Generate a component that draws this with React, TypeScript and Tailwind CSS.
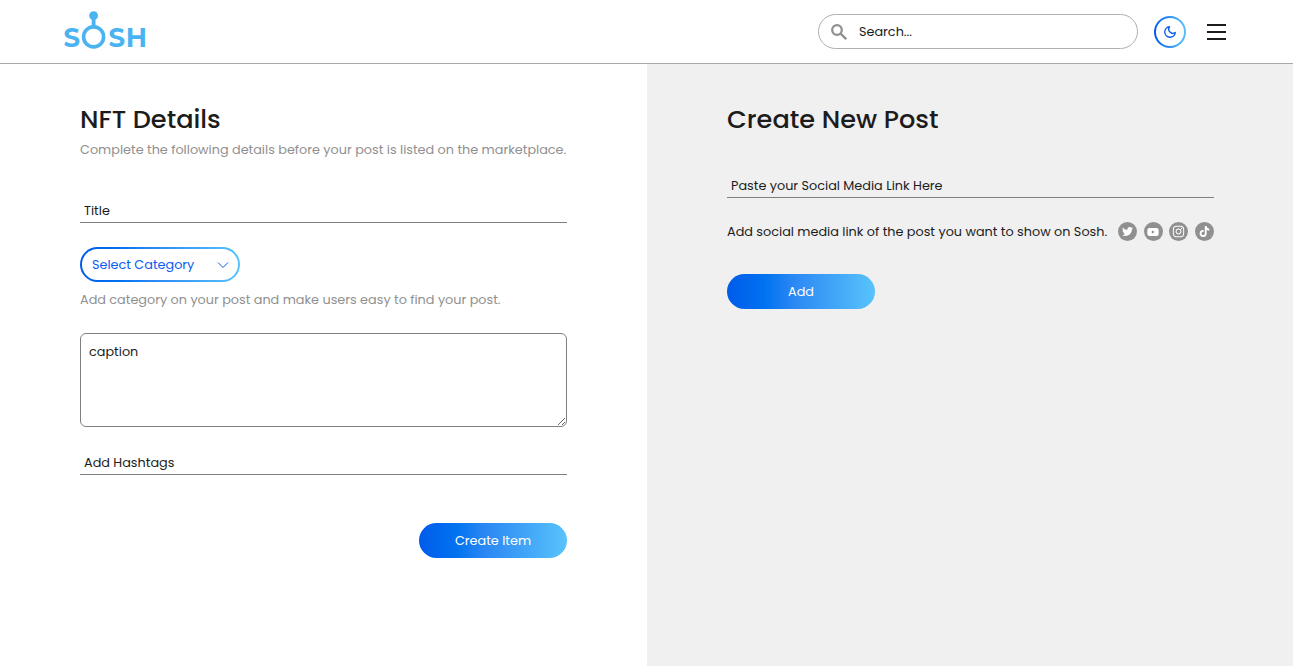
import React from "react";
import { FaTwitter, FaYoutube, FaInstagram, FaTiktok } from "react-icons/fa";
import { FiMoon } from "react-icons/fi";

function Logo() {
  return (
    <svg width="84" height="48" viewBox="0 0 84 48" fill="#4ab3f1" className="block overflow-visible" aria-label="Sosh">
      <circle cx="29.6" cy="5.7" r="4.4" />
      <rect x="27.7" y="8" width="3.8" height="10" />
      <circle cx="29.6" cy="26.9" r="10" fill="none" stroke="#4ab3f1" strokeWidth="3.6" />
      <g fontFamily="Montserrat, Lato, sans-serif" fontWeight="700" fontSize="27">
        <text x="-0.6" y="37" textLength="16.6" lengthAdjust="spacingAndGlyphs">S</text>
        <text x="44.4" y="37" textLength="16.6" lengthAdjust="spacingAndGlyphs">S</text>
        <text x="61.7" y="37" textLength="21.3" lengthAdjust="spacingAndGlyphs">H</text>
      </g>
    </svg>
  );
}

function Header() {
  return (
    <header className="flex h-16 shrink-0 items-center border-b border-[#a9a9a9] bg-white pl-16 pr-[67px]">
      <div className="mb-[3px] mt-2"><Logo /></div>
      <div className="ml-auto flex h-[35px] w-80 items-center rounded-full border border-[#b0b0b0] pl-3">
        <svg width="16" height="16" viewBox="0 0 16 16" fill="none" stroke="#909090" strokeWidth="2.3" className="shrink-0">
          <circle cx="6" cy="6" r="4.8" />
          <path d="m9.6 9.6 5.6 5.6" />
        </svg>
        <input
          placeholder="Search..."
          className="ml-3 w-60 text-[12.8px] outline-none placeholder:text-[#1c1c1c]"
        />
      </div>
      <button className="ml-4 size-8 rounded-full bg-linear-to-r from-[#005bea] to-[#58c3fc] p-0.5">
        <span className="flex size-full items-center justify-center rounded-full bg-white">
          <FiMoon className="size-[14px] text-[#0a5cf0]" strokeWidth={2.4} />
        </span>
      </button>
      <button className="ml-5 flex w-5 flex-col gap-[5px] px-[0.5px]">
        <span className="h-0.5 w-full bg-[#1c1c1c]" />
        <span className="h-0.5 w-full bg-[#1c1c1c]" />
        <span className="h-0.5 w-full bg-[#1c1c1c]" />
      </button>
    </header>
  );
}

const field =
  "block h-6 w-full border-b border-[#808080] bg-transparent px-1 text-[12.8px] outline-none placeholder:text-[#1c1c1c]";
const action =
  "flex h-[35px] w-[148px] items-center justify-center rounded-full bg-[linear-gradient(90deg,#005bea_0%,#0072f0_25%,#2b88f3_45%,#58c3fc_100%)] text-[12.8px] text-white";

function Social({ children }: { children: React.ReactNode }) {
  return (
    <span className="flex size-[19px] items-center justify-center rounded-full bg-[#909090] text-white">
      {children}
    </span>
  );
}

export default function App() {
  return (
    <div className="flex h-screen flex-col overflow-hidden bg-white font-['Poppins','Inter',sans-serif] text-[12.8px] text-[#1c1c1c]">
      <Header />
      <main className="grid flex-1 grid-cols-[647px_1fr]">
        <section className="px-20 pt-[39px]">
          <h1 className="whitespace-nowrap text-[25.6px] font-medium leading-8">NFT Details</h1>
          <p className="mt-[5px] whitespace-nowrap leading-5 text-[#909090]">
            Complete the following details before your post is listed on the marketplace.
          </p>
          <input placeholder="Title" className={`${field} mt-[39px]`} />
          <button className="mt-6 block h-[35px] w-40 rounded-full bg-[linear-gradient(90deg,#005bea_0%,#0072f0_25%,#2b88f3_45%,#58c3fc_100%)] p-0.5">
            <span className="flex size-full items-center justify-between rounded-full bg-white pl-[10px] pr-[9px] text-[#0a5cf0]">
              Select Category
              <svg width="12" height="8" viewBox="0 0 12 8" fill="none" stroke="currentColor">
                <path d="M1 1.5 6 6.5 11 1.5" />
              </svg>
            </span>
          </button>
          <p className="mt-2 whitespace-nowrap leading-5 text-[#909090]">
            Add category on your post and make users easy to find your post.
          </p>
          <textarea
            placeholder="caption"
            className="mt-[23px] block h-[94px] w-full rounded-md border border-[#808080] px-2 py-2 leading-5 outline-none placeholder:text-[#1c1c1c]"
          />
          <input placeholder="Add Hashtags" className={`${field} mt-6`} />
          <div className="mt-12 flex justify-end">
            <button className={action}>Create Item</button>
          </div>
        </section>
        <section className="bg-[#f0f0f0] pl-20 pr-[79px] pt-[39px]">
          <h1 className="whitespace-nowrap text-[25.6px] font-medium leading-8">Create New Post</h1>
          <input placeholder="Paste your Social Media Link Here" className={`${field} mt-[39px]`} />
          <div className="mt-6 flex h-5 items-start justify-between">
            <p className="whitespace-nowrap leading-5">Add social media link of the post you want to show on Sosh.</p>
            <div className="flex w-24 justify-between">
              <Social><FaTwitter className="size-[11px]" /></Social>
              <Social><FaYoutube className="size-3" /></Social>
              <Social><FaInstagram className="size-[13px]" /></Social>
              <Social><FaTiktok className="size-[11px]" /></Social>
            </div>
          </div>
          <button className={`${action} mt-8`}>Add</button>
        </section>
      </main>
    </div>
  );
}
